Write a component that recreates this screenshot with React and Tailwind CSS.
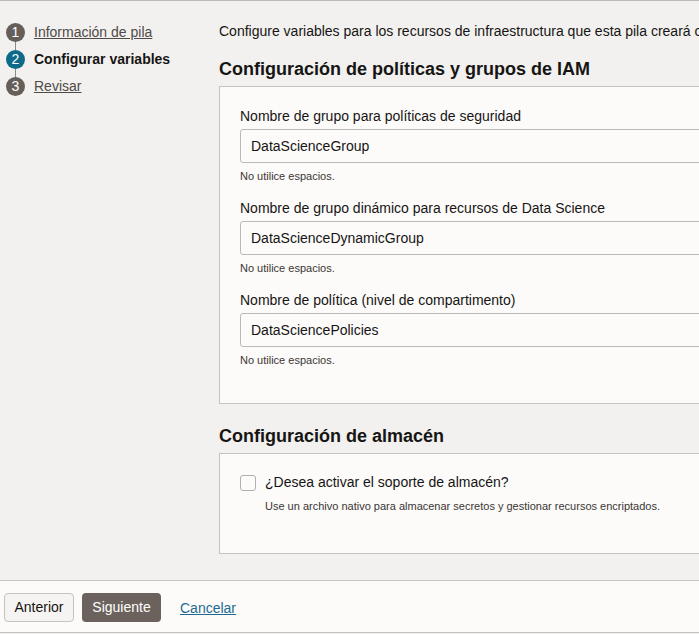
import React, { useState } from 'react';

const steps = [
  { n: 1, label: 'Información de pila', state: 'done' },
  { n: 2, label: 'Configurar variables', state: 'current' },
  { n: 3, label: 'Revisar', state: 'todo' },
];

const fields = [
  { label: 'Nombre de grupo para políticas de seguridad', value: 'DataScienceGroup' },
  { label: 'Nombre de grupo dinámico para recursos de Data Science', value: 'DataScienceDynamicGroup' },
  { label: 'Nombre de política (nivel de compartimento)', value: 'DataSciencePolicies' },
];

function Field({ label, value, first }) {
  return (
    <div className={first ? '' : 'mt-[15px]'}>
      <div className="text-[14px] leading-[20px] text-[#161513]">{label}</div>
      <div className="mt-[3px] h-[34px] w-[520px] rounded-[3px] border border-[#bcb9b5] bg-[#fcfbfa] flex items-center px-[10px] text-[14px] text-[#161513]">
        {value}
      </div>
      <div className="mt-[6px] text-[11px] leading-[14px] text-[#3a3633]">No utilice espacios.</div>
    </div>
  );
}

export default function App() {
  const [vault, setVault] = useState(false);

  return (
    <div
      className="h-[634px] w-full overflow-hidden flex flex-col bg-[#f2f1ef] text-[#161513]"
      style={{ fontFamily: '"Liberation Sans", Arial, sans-serif' }}
    >
      <div className="h-px bg-[#bdbab6] shrink-0" />

      <div className="flex-1 flex min-h-0">
        {/* Steps */}
        <div className="w-[219px] shrink-0 pt-[18px]">
          <div className="relative">
            <div className="absolute left-[15px] top-[14px] bottom-[14px] w-px bg-[#8f8984]" />
            {steps.map((s) => (
              <div key={s.n} className="relative h-[27px] flex items-center">
                <div
                  className={`ml-[6px] w-[19px] h-[19px] rounded-full flex items-center justify-center text-[14px] text-white ${
                    s.state === 'current' ? 'bg-[#0e6a89]' : 'bg-[#655e59]'
                  }`}
                >
                  {s.n}
                </div>
                {s.state === 'current' ? (
                  <span className="ml-[9px] text-[14px] font-bold text-[#161513]">{s.label}</span>
                ) : (
                  <a href="#" className="ml-[9px] text-[14px] underline text-[#4f4a46]">{s.label}</a>
                )}
              </div>
            ))}
          </div>
        </div>

        {/* Content */}
        <div className="w-[620px] shrink-0 pt-[20px]">
          <p className="text-[14px] leading-[20px] whitespace-nowrap">
            Configure variables para los recursos de infraestructura que esta pila creará cuando ejecute el trabajo.
          </p>

          <h2 className="mt-[16px] text-[18px] leading-[24px] font-bold">Configuración de políticas y grupos de IAM</h2>
          <div className="mt-[5px] border border-[#c6c3bf] bg-[#fcfbfa] pl-[20px] pt-[19px] pb-[36px]">
            {fields.map((f, i) => (
              <Field key={f.value} label={f.label} value={f.value} first={i === 0} />
            ))}
          </div>

          <h2 className="mt-[20px] text-[18px] leading-[24px] font-bold">Configuración de almacén</h2>
          <div className="mt-[5px] border border-[#c6c3bf] bg-[#fcfbfa] pl-[20px] pt-[18px] pb-[40px]">
            <div className="flex">
              <button
                onClick={() => setVault(!vault)}
                className="mt-[3px] w-[16px] h-[16px] rounded-[3px] border border-[#b3afab] bg-[#fcfbfa] shrink-0"
              />
              <div className="ml-[9px]">
                <div className="text-[14px] leading-[20px]">¿Desea activar el soporte de almacén?</div>
                <div className="mt-[7px] text-[11px] leading-[14px] text-[#3a3633]">
                  Use un archivo nativo para almacenar secretos y gestionar recursos encriptados.
                </div>
              </div>
            </div>
          </div>
        </div>
      </div>

      {/* Footer */}
      <div className="h-[53px] shrink-0 border-t border-b border-[#c6c3bf] bg-[#fcfbfa] flex items-start pt-[12px] px-[4px]">
        <button className="h-[29px] w-[70px] rounded-[4px] border border-[#c6c3bf] bg-[#f5f4f2] text-[14px] text-[#161513]">
          Anterior
        </button>
        <button className="ml-[8px] h-[29px] w-[79px] rounded-[4px] bg-[#6b625d] text-[14px] text-white">
          Siguiente
        </button>
        <a href="#" className="ml-[19px] mt-[5px] text-[14px] leading-[20px] underline text-[#1e6b91]">Cancelar</a>
      </div>
      <div className="h-px shrink-0" />
    </div>
  );
}
